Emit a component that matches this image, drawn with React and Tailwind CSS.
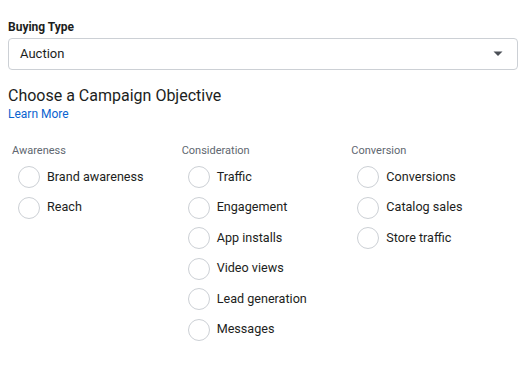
import React from "react";

const cols = [
  { title: "Awareness", items: ["Brand awareness", "Reach"] },
  { title: "Consideration", items: ["Traffic", "Engagement", "App installs", "Video views", "Lead generation", "Messages"] },
  { title: "Conversion", items: ["Conversions", "Catalog sales", "Store traffic"] },
];

export default function App() {
  return (
    <div className="w-[529px] h-[383px] bg-white px-2 pt-[19px] text-[#1c1e21]" style={{ fontFamily: "Roboto, 'Liberation Sans', sans-serif" }}>
      <div className="text-[12px] leading-[16px] font-bold">Buying Type</div>
      <div className="mt-[3px] flex h-[32px] w-[510px] items-center justify-between rounded-[4px] border border-[#ccd0d5] pl-[11px] pr-[14px]">
        <span className="text-[13px]">Auction</span>
        <svg width="10" height="6" viewBox="0 0 10 6">
          <path d="M0.5 0.5 L9.5 0.5 L5 5 Z" fill="#4b4f56" />
        </svg>
      </div>
      <div className="mt-[16px] text-[16px] leading-[20px]">Choose a Campaign Objective</div>
      <div className="text-[12px] leading-[16px] text-[#0a63d0]">Learn More</div>
      <div className="mt-[21px] flex pl-1">
        {cols.map((c) => (
          <div key={c.title} className="w-[170px]">
            <div className="text-[11px] leading-[16px] text-[#606770]">{c.title}</div>
            <div className="mt-[3px] pl-[6px]">
              {c.items.map((it) => (
                <div key={it} className="flex h-[30.5px] items-center">
                  <span className="h-[22px] w-[22px] shrink-0 rounded-full border border-[#ccd0d5]" />
                  <span className="ml-[7px] text-[12.6px]">{it}</span>
                </div>
              ))}
            </div>
          </div>
        ))}
      </div>
    </div>
  );
}
